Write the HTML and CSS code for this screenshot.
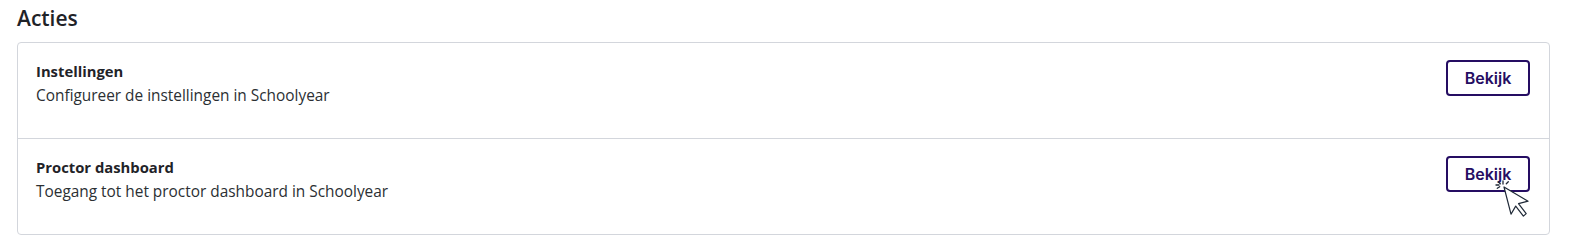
FILE: index.html
```html
<!DOCTYPE html>
<html lang="nl">
<head>
  <meta charset="UTF-8">
  <title>Acties</title>
  <link rel="stylesheet" href="styles.css">
</head>
<body>
  <section class="acties">
    <h2 class="acties-titel">Acties</h2>
    <div class="kaart">
      <div class="rij">
        <div class="rij-tekst">
          <div class="rij-titel">Instellingen</div>
          <div class="rij-omschrijving">Configureer de instellingen in Schoolyear</div>
        </div>
        <button class="knop">Bekijk</button>
      </div>
      <div class="rij">
        <div class="rij-tekst">
          <div class="rij-titel">Proctor dashboard</div>
          <div class="rij-omschrijving">Toegang tot het proctor dashboard in Schoolyear</div>
        </div>
        <div class="knop-wrap">
          <button class="knop">Bekijk</button>
          <!-- muisaanwijzer met klik-effect -->
          <svg class="cursor" width="44" height="44" viewBox="0 0 44 44">
            <g stroke="#1f2937" stroke-width="1.3" stroke-linecap="round">
              <line x1="9" y1="4" x2="9" y2="7"/>
              <line x1="2" y1="8" x2="5" y2="8"/>
              <line x1="4.3" y1="4.7" x2="6.3" y2="6.7"/>
              <line x1="14.3" y1="4.7" x2="12.3" y2="6.7"/>
              <line x1="3.3" y1="11.3" x2="5.7" y2="9.7"/>
            </g>
            <path d="M10 10 L17 37.2 L21.7 29.1 L29.4 39.1 L32.2 36.6 L24.5 26.7 L34.1 24.2 Z" fill="#fff" stroke="#1f2937" stroke-width="1.2" stroke-linejoin="round"/>
          </svg>
        </div>
      </div>
    </div>
  </section>
</body>
</html>
```

FILE: styles.css
```css
/* Basis */
body, html {
  margin: 0;
  padding: 0;
  background: #fff;
  font-family: "Open Sans", "Noto Sans", Arial, sans-serif;
  color: #1f2328;
}

.acties {
  padding: 4px 40px 0 17px;
}

.acties-titel {
  margin: 0 0 10px 0;
  font-size: 21px;
  font-weight: 600;
  line-height: 28px;
  color: #1f2328;
}

/* Kaart met rijen */
.kaart {
  border: 1px solid #d3d6dc;
  border-radius: 4px;
}

.rij {
  display: flex;
  justify-content: space-between;
  align-items: flex-start;
  padding: 17px 19px 0 18px;
  height: 78px;
}

.rij + .rij {
  border-top: 1px solid #d3d6dc;
}

.rij-titel {
  font-size: 14.8px;
  font-weight: 700;
  line-height: 22px;
}

.rij-omschrijving {
  margin-top: 2px;
  font-size: 15.4px;
  line-height: 24px;
  color: #2b2f33;
}

.knop-wrap {
  position: relative;
}

/* Bekijk knop */
.knop {
  display: block;
  width: 84px;
  height: 36px;
  border: 2px solid #250d62;
  border-radius: 4px;
  background: #fff;
  color: #250d62;
  font-family: "Inter", "Noto Sans", sans-serif;
  font-size: 16px;
  font-weight: 600;
  cursor: pointer;
}

/* Muisaanwijzer over de knop */
.cursor {
  position: absolute;
  left: 48px;
  top: 21px;
}
```
